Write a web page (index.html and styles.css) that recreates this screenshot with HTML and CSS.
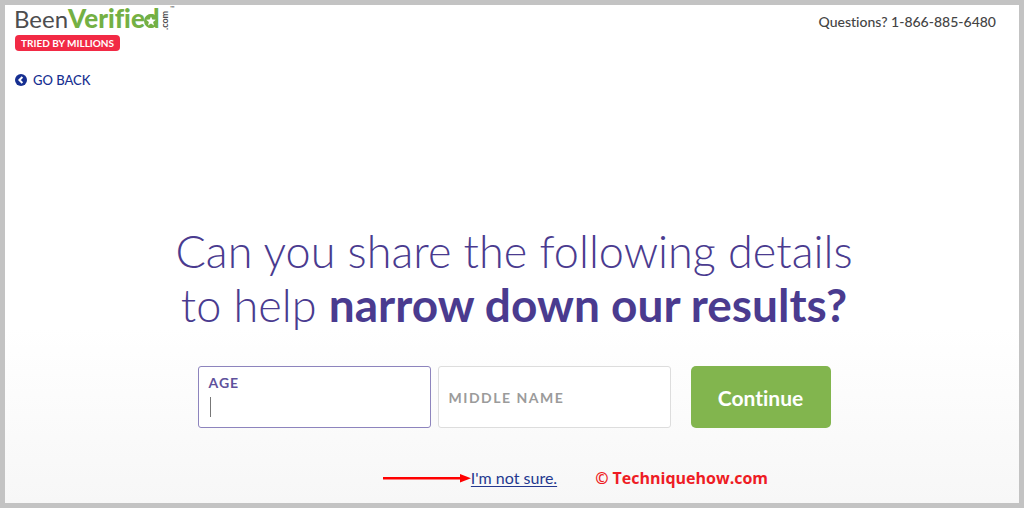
FILE: index.html
```html
<!DOCTYPE html>
<html lang="en">
<head>
<meta charset="utf-8">
<title>BeenVerified</title>
<link rel="stylesheet" href="styles.css">
</head>
<body>
<div class="page">
  <header class="header">
    <div class="brand">
      <div class="logo">
        <span class="logo-been">Been</span><span class="logo-verified">Verified</span>
        <svg class="logo-star" viewBox="0 0 14 14" aria-hidden="true"><circle cx="7" cy="7" r="7"/><path d="M7 2.5 8.3 5.6 11.8 5.8 9.1 8 10 11.5 7 9.6 4 11.5 4.9 8 2.2 5.8 5.7 5.6Z"/></svg>
        <span class="logo-com">.com</span><span class="logo-tm">™</span>
      </div>
      <span class="tag">TRIED BY MILLIONS</span>
    </div>
    <p class="phone">Questions? 1-866-885-6480</p>
  </header>
  <a class="back" href="#">
    <svg class="back-icon" viewBox="0 0 12 12" aria-hidden="true"><circle cx="6" cy="6" r="6"/><path d="M7.4 3 4.4 6 7.4 9"/></svg>
    GO BACK
  </a>
  <main class="main">
    <h1 class="title">Can you share the following details<br>to help <strong>narrow down our results?</strong></h1>
    <form class="form">
      <div class="field field-active">
        <label class="label" for="age">AGE</label>
        <div class="entry"><span class="caret"></span><input class="input" id="age" type="text"></div>
      </div>
      <div class="field">
        <input class="input input-name" type="text" placeholder="MIDDLE NAME" aria-label="Middle name">
      </div>
      <button class="continue" type="button">Continue</button>
    </form>
    <div class="footer">
      <svg class="arrow" viewBox="0 0 88 10" aria-hidden="true"><path d="M0 4h78v2.4H0z"/><path d="M77 1 88 5.2 77 9.4z"/></svg>
      <a class="unsure" href="#">I'm not sure.</a>
      <span class="credit">© Techniquehow.com</span>
    </div>
  </main>
</div>
</body>
</html>
```
FILE: styles.css
```css
* { box-sizing: border-box; }
body {
  margin: 0;
  min-height: 100vh;
  display: flex;
  padding: 5px;
  background: #c3c3c3;
  font-family: Lato, sans-serif;
  font-variant-ligatures: none;
}
.page {
  flex: 1;
  padding: 0 23px 0 9px;
  background: linear-gradient(#fff 0, #fff 65%, #f7f7f7 100%);
}
.header { display: flex; justify-content: space-between; }
.logo {
  position: relative;
  display: flex;
  height: 30px;
  line-height: 28px;
}
.logo-been { color: #4d4d4f; font-size: 24px; }
.logo-verified { color: #74b044; font-size: 26px; font-weight: 900; line-height: 27px; }
.logo-star {
  position: absolute;
  left: 130px;
  top: 9px;
  width: 14px;
  height: 14px;
  fill: #74b044;
}
.logo-star path { fill: #fff; }
.logo-com {
  writing-mode: vertical-rl;
  transform: rotate(180deg);
  height: 25px;
  line-height: 10px;
  font-size: 9px;
  font-weight: 700;
  color: #4d4d4f;
}
.logo-tm { font-size: 6px; line-height: 6px; color: #4d4d4f; }
.tag {
  display: block;
  width: max-content;
  padding: 0 6px;
  margin-left: 1px;
  border-radius: 4px;
  background: #f22a45;
  color: #fff;
  font-size: 10px;
  font-weight: 700;
  line-height: 16px;
}
.phone { margin: 8px 0 0; font-size: 14px; line-height: 18px; font-weight: 500; color: #444; }
.back {
  display: flex;
  width: max-content;
  align-items: center;
  gap: 6px;
  margin: 19px 0 0 1px;
  color: #162f91;
  font-size: 13px;
  line-height: 20px;
  font-weight: 500;
  text-decoration: none;
}
.back-icon { width: 12px; height: 12px; fill: #162f91; }
.back-icon path { fill: none; stroke: #fff; stroke-width: 2; }
.main { margin-top: 134px; padding-left: 18px; }
.title {
  margin: 0;
  color: #4a3b8f;
  font-size: 45px;
  line-height: 54px;
  font-weight: 300;
  text-align: center;
}
.title strong { font-size: 46px; font-weight: 700; }
.form { display: flex; justify-content: center; gap: 7px; margin-top: 34px; }
.field {
  flex: 0 1 233px;
  height: 62px;
  padding: 8px 10px;
  border: 1px solid #ddd;
  border-radius: 3px;
  background: #fff;
}
.field-active { border-color: #8d84bd; }
.label {
  display: block;
  color: #5f529c;
  font-size: 14px;
  line-height: 16px;
  font-weight: 700;
  letter-spacing: 1px;
}
.entry { display: flex; margin-top: 6px; }
.caret { width: 1px; height: 20px; margin-left: 1px; background: #777; }
.input {
  width: 100%;
  min-width: 0;
  padding: 0;
  border: 0;
  outline: 0;
  background: transparent;
  font-family: inherit;
  font-size: 14px;
}
.input-name { height: 44px; font-weight: 700; letter-spacing: 1.5px; }
.input-name::placeholder { color: #9b9b9b; opacity: 1; }
.continue {
  width: 140px;
  margin-left: 13px;
  border: 0;
  border-radius: 5px;
  background: #82b54e;
  color: #fff;
  font-family: inherit;
  font-size: 21px;
  font-weight: 700;
  font-variant-ligatures: none;
}
.footer {
  display: grid;
  grid-template-columns: 1fr auto 1fr;
  align-items: center;
  margin-top: 40px;
}
.arrow { justify-self: end; width: 88px; height: 10px; fill: #f00; }
.unsure { color: #24388f; font-size: 16px; line-height: 20px; text-underline-offset: 2px; }
.credit {
  margin-left: 38px;
  color: #ee1c24;
  font-family: "Open Sans", sans-serif;
  font-size: 16px;
  line-height: 20px;
  font-weight: 700;
}
```
